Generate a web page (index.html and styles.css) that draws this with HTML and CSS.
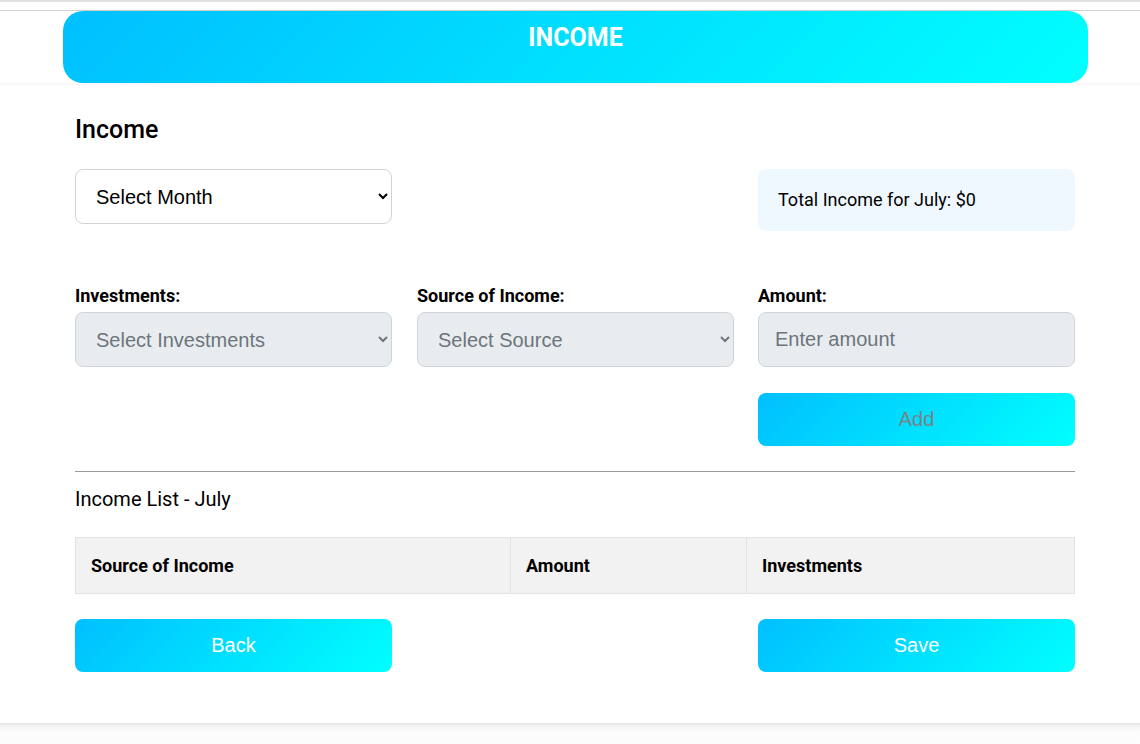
FILE: index.html
```html
<!DOCTYPE html>
<html lang="en">
<head>
<meta charset="utf-8">
<title>Income</title>
<link rel="stylesheet" href="styles.css">
</head>
<body>
<div class="topbar"></div>
<header class="header">
  <div class="banner"><h1 class="banner-title">INCOME</h1></div>
</header>
<main class="card">
  <div class="container">
    <h2 class="title">Income</h2>
    <div class="grid month-row">
      <select class="control">
        <option>Select Month</option>
      </select>
      <div class="total">Total Income for July: $0</div>
    </div>
    <div class="grid form-grid">
      <div class="field">
        <label class="label">Investments:</label>
        <select class="control" disabled><option>Select Investments</option></select>
      </div>
      <div class="field">
        <label class="label">Source of Income:</label>
        <select class="control" disabled><option>Select Source</option></select>
      </div>
      <div class="field">
        <label class="label">Amount:</label>
        <input class="control input" type="text" placeholder="Enter amount" disabled>
      </div>
      <button class="btn add-btn" disabled>Add</button>
    </div>
    <hr class="divider">
    <p class="list-title">Income List - July</p>
    <table class="table">
      <thead>
        <tr>
          <th class="col-source">Source of Income</th>
          <th class="col-amount">Amount</th>
          <th>Investments</th>
        </tr>
      </thead>
    </table>
    <div class="grid actions">
      <button class="btn">Back</button>
      <button class="btn save-btn">Save</button>
    </div>
  </div>
</main>
<div class="below"></div>
</body>
</html>
```
FILE: styles.css
```css
* { box-sizing: border-box; }
html, body {
  margin: 0;
  padding: 0;
  background: #ffffff;
  font-family: Roboto, "Liberation Sans", Arial, sans-serif;
  color: #000;
}
.topbar {
  height: 11px;
  border-top: 2px solid #e2e2e2;
  border-bottom: 1px solid #cfcfcf;
  background: #fff;
}
.header {
  position: relative;
  z-index: 1;
  background: #fff;
  height: 72px;
  box-shadow: 0 2px 3px rgba(0, 0, 0, 0.04);
}
.banner {
  margin-left: 63px;
  width: 1025px;
  height: 72px;
  border-radius: 20px;
  background: linear-gradient(135deg, #00bfff, #00ffff);
  padding-top: 13px;
}
.banner-title {
  margin: 0;
  text-align: center;
  color: #fff;
  font-family: Roboto, sans-serif;
  font-weight: 700;
  font-size: 25px;
  line-height: 28px;
}
.card {
  background: #fff;
  padding: 33px 0 51px;
}
.below {
  height: 22px;
  background: linear-gradient(to bottom, #e4e4e4 0, #f3f3f3 3px, #fbfbfb 8px, #fdfdfd 100%);
}
.container {
  margin-left: 75px;
  width: 1000px;
}
.title {
  margin: 0 0 25px;
  font-size: 25px;
  line-height: 28px;
  font-weight: 500;
}
.grid {
  display: grid;
  grid-template-columns: 342px 341px 317px;
  justify-items: start;
  align-items: start;
}
.month-row > .total { grid-column: 3; }
.control {
  display: block;
  width: 100%;
  height: 55px;
  border: 1px solid #cfd4d9;
  border-radius: 8px;
  background: #fff;
  font-family: "Liberation Sans", Arial, sans-serif;
  font-size: 20px;
  color: #000;
  padding: 0 16px;
}
.control:disabled {
  background: #e9ecef;
  border-color: #ced4da;
  color: #6c757d;
  opacity: 1;
}
.input::placeholder { color: #6c757d; }
.total {
  background: #f0f8ff;
  border-radius: 8px;
  padding: 20px;
  font-size: 18px;
  line-height: 22px;
}
.form-grid {
  margin-top: 54px;
  row-gap: 26px;
}
.field { display: flex; flex-direction: column; }
.label {
  font-weight: 700;
  font-size: 18px;
  line-height: 21px;
  margin-bottom: 6px;
}
.btn {
  display: block;
  width: 100%;
  height: 53px;
  border: none;
  border-radius: 8px;
  background: linear-gradient(135deg, #00bfff, #00ffff);
  color: #fff;
  font-family: "Liberation Sans", Arial, sans-serif;
  font-size: 20px;
  cursor: pointer;
}
.add-btn { grid-column: 3; color: #7a8489; }
.save-btn { grid-column: 3; }
.divider {
  margin: 25px 0 0;
  border: none;
  border-top: 1px solid #9a9a9a;
  height: 0;
}
.list-title {
  margin: 15px 0 26px;
  font-size: 20px;
  line-height: 24px;
}
.table {
  width: 100%;
  border-collapse: collapse;
}
.table th {
  background: #f2f2f2;
  border: 1px solid #dfe2e6;
  text-align: left;
  font-weight: 700;
  font-size: 18px;
  line-height: 23px;
  padding: 16px 15px;
}
.col-source { width: 435px; }
.col-amount { width: 236px; }
.actions { margin-top: 25px; }
.grid > .control,
.grid > .btn,
.grid > .field,
.grid > .total { width: 317px; }
```
